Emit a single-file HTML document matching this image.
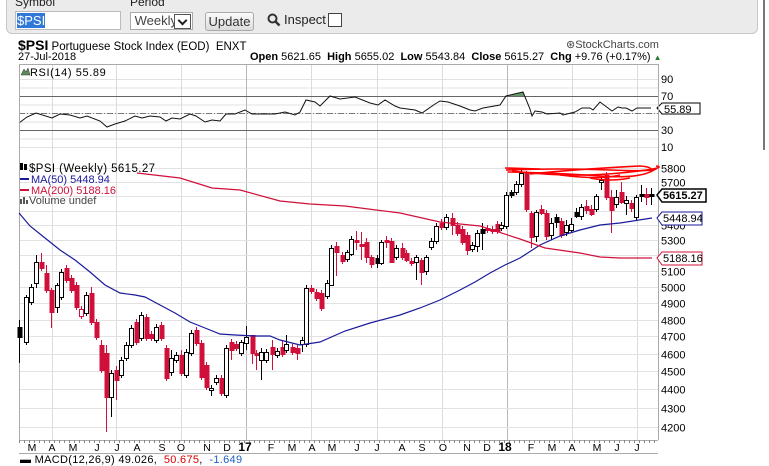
<!DOCTYPE html>
<html><head><meta charset="utf-8">
<style>
body{margin:0;width:769px;height:462px;overflow:hidden;background:#fff;font-family:"Liberation Sans",Arial,sans-serif;position:relative}
.abs{position:absolute;white-space:nowrap}
</style></head><body>
<div class="abs" style="left:6px;top:-6px;width:750px;height:38px;background:#ebebeb;border:1px solid #c8c8c8;border-radius:0 0 6px 6px"></div>
<div class="abs" style="left:15px;top:-5px;font-size:12px;color:#222">Symbol</div>
<div class="abs" style="left:130px;top:-5px;font-size:12px;color:#222">Period</div>
<div class="abs" style="left:15px;top:11px;width:104px;height:17px;background:#fff;border:1px solid #bbb;font-size:13px;line-height:17px"><span style="background:#3078d8;color:#fff;margin-left:1px">$PSI</span></div>
<div class="abs" style="left:130px;top:12px;width:61px;height:16px;background:#fff;border:1px solid #aaa;font-size:13px;line-height:16px;color:#444">&nbsp;Weekly<span style="position:absolute;right:1px;top:1px;width:15px;height:13px;border:1px solid #555;background:#fff"><span style="position:absolute;left:4px;top:2px;width:5px;height:5px;border-right:2px solid #222;border-bottom:2px solid #222;transform:rotate(45deg)"></span></span></div>
<div class="abs" style="left:205px;top:12px;width:47px;height:17px;background:linear-gradient(#fafafa,#dcdcdc);border:1px solid #aaa;border-radius:3px;font-size:13px;line-height:17px;text-align:center;color:#333">Update</div>
<svg class="abs" style="left:267px;top:13px" width="14" height="14"><circle cx="5.5" cy="5.5" r="4" fill="none" stroke="#333" stroke-width="2"/><line x1="8.5" y1="8.5" x2="12.5" y2="12.5" stroke="#333" stroke-width="2.5"/></svg>
<div class="abs" style="left:284px;top:12px;font-size:13px;color:#222">Inspect</div>
<div class="abs" style="left:328px;top:13px;width:12px;height:12px;background:#fff;border:1px solid #444"></div>
<div class="abs" style="left:763px;top:0;width:2px;height:150px;background:#777"></div>

<div class="abs" style="left:18px;top:37px;font-size:11.5px;color:#000"><b style="font-size:14px">$PSI</b> Portuguese Stock Index (EOD)&nbsp; ENXT</div>
<div class="abs" style="left:18px;top:51px;font-size:11px">27-Jul-2018</div>
<div class="abs" style="left:566px;top:38px;font-size:11px;color:#444">&#x229B;StockCharts.com</div>
<div class="abs" style="left:250px;top:51px;font-size:11px"><b>Open</b> 5621.65&nbsp; <b>High</b> 5655.02&nbsp; <b>Low</b> 5543.84&nbsp; <b>Close</b> 5615.27&nbsp; <b>Chg</b> +9.76 (+0.17%) <span style="color:#2a7a2a;font-size:8px">&#9650;</span></div>

<svg id="c" class="abs" style="left:0;top:0" width="769" height="462" font-family="Liberation Sans, Arial, sans-serif"></svg>
<div class="abs" style="left:20px;top:454px;font-size:11px;letter-spacing:0.3px">&#9644; MACD(12,26,9) 49.026,&nbsp; <span style="color:#d00">50.675</span>,&nbsp; <span style="color:#2060c0">-1.649</span></div>
<script>
var s=[],L=19,R=658;
function ln(x1,y1,x2,y2,c,w,d){s.push('<line x1="'+x1+'" y1="'+y1+'" x2="'+x2+'" y2="'+y2+'" stroke="'+c+'" stroke-width="'+(w||1)+'"'+(d?' stroke-dasharray="'+d+'"':'')+'/>');}
function tx(x,y,t,sz,c,extra){s.push('<text x="'+x+'" y="'+y+'" font-size="'+(sz||11)+'" fill="'+(c||'#000')+'" '+(extra||'')+'>'+t+'</text>');}
var ry=function(v){return 113+(50-v)*0.85};
for(var v=10;v<=90;v+=10){ln(L,ry(v)+.5,R,ry(v)+.5,'#e2e2e2');}
var vx=[52,116,181,311,377,442,572,637];
vx.forEach(function(x){ln(x+.5,64,x+.5,440,'#dcdcdc');});
[246,507].forEach(function(x){ln(x+.5,64,x+.5,440,'#b8b8b8');});
ln(L,96.5,R,96.5,'#666');ln(L,130.5,R,130.5,'#666');ln(L,113.5,R,113.5,'#777',1,'6,2,1,2');
[90,70,50,30,10].forEach(function(v){if(v!=50)tx(661,ry(v)+4,v,11);});
var rsi=[[19,123],[27,117],[36,113],[52,118],[60,114],[70,115],[80,118],[87,116],[100,121],[107,127],[115,124],[125,121],[135,116],[142,118],[150,116],[160,117],[166,121],[172,118],[180,119],[190,114],[196,116],[205,122],[212,120],[220,121],[226,114],[235,114],[245,110],[252,114],[275,114],[285,112],[295,115],[300,112],[306,100],[315,102],[320,106],[330,96],[340,99],[355,97],[370,103],[378,105],[385,100],[395,106],[400,108],[415,110],[422,113],[435,104],[440,101],[448,102],[460,106],[470,110],[475,111],[483,108],[500,105],[506,96],[523,92],[530,109],[532,116],[535,111],[542,112],[547,114],[560,113],[563,115],[575,112],[582,108],[590,108],[593,110],[600,102],[608,108],[612,111],[618,107],[622,108],[626,108],[632,111],[637,108],[645,108],[651,108]];
s.push('<polygon points="506,96 523,92 525,96" fill="#6a9a6a"/>');
s.push('<polyline points="'+rsi.join(' ')+'" fill="none" stroke="#111" stroke-width="1"/>');
s.push('<path d="M657 108 l5 -5 h38 v11 h-38z" fill="#fff" stroke="#000"/>');tx(664,113,'55.89',11);
var py=function(p){return 168+801*Math.log(5800/p)};
for(var p=4200;p<=5800;p+=100){var y=Math.round(py(p))+.5;ln(L,y,R,y,'#e2e2e2');if(![5500,5600].includes(p))tx(661,y+4,p,11);}
ln(L+.5,64,L+.5,440,'#aaa');ln(R+.5,64,R+.5,440,'#aaa');ln(L,64.5,R,64.5,'#aaa');ln(L,440.5,R,440.5,'#aaa');
var C=[[19,327,337,'b',320,363],[26,297,342,'w',295,345],[31,287,302,'w'],[36,262,283,'w',255,288],[41,262,268,'r',253],[46,273,290,'r',265],[51,290,312,'r',288,328],[57,285,307,'w',283,313],[61,272,297,'w'],[66,268,280,'r'],[71,278,290,'r'],[76,285,307,'r'],[81,309,316,'h'],[86,295,313,'w'],[91,293,322,'r',287],[96,322,337,'r'],[101,345,370,'r',340],[106,353,397,'r',345,432],[111,373,397,'w',370,417],[116,370,380,'r',366,400],[121,360,375,'w'],[126,345,358,'w'],[131,328,345,'w'],[136,322,342,'r'],[141,315,338,'w'],[146,317,338,'r',314],[151,334,338,'r'],[156,327,340,'w'],[161,325,338,'r'],[166,348,378,'r'],[171,358,372,'w',350,376],[176,355,360,'w'],[181,355,373,'r',350,376],[186,352,375,'w'],[191,333,353,'w'],[196,330,343,'r'],[201,343,377,'r'],[206,365,387,'r'],[211,388,390,'w',385,396],[216,378,382,'w'],[221,378,393,'r'],[226,348,395,'w'],[231,342,350,'r',339,360],[236,344,348,'r'],[241,342,353,'w',340,356],[246,337,343,'w',326,350],[252,335,353,'r',335,364],[256,353,355,'r',350,370],[261,352,360,'w',348,380],[266,352,360,'w'],[272,347,354,'r',340,370],[277,351,355,'w'],[282,347,354,'r',340],[286,344,350,'w',335],[292,347,352,'r'],[297,348,353,'r',345,360],[302,340,344,'w',337,352],[306,288,344,'w'],[311,288,291,'r'],[316,292,298,'r'],[321,293,308,'r'],[327,283,296,'w'],[331,248,285,'w',245,286],[336,246,252,'r',242,276],[342,255,261,'r'],[347,252,259,'w',250,262],[351,239,254,'w',236,256],[356,240,242,'r',231,250],[361,244,246,'r',232,260],[366,242,257,'r',238,263],[371,257,264,'r',255,268],[377,258,263,'b',255,268],[381,242,263,'w',240,265],[386,240,242,'r',236,248],[391,241,262,'r',238,263],[396,248,257,'w'],[402,248,257,'r',243,260],[406,253,260,'r',250,262],[411,261,263,'r'],[416,257,262,'w',255,280],[421,260,272,'r',258,285],[426,257,271,'w',255,275],[431,241,247,'w'],[436,226,241,'w'],[441,223,227,'r',219],[446,217,227,'w'],[452,218,225,'r',213,235],[457,225,233,'r'],[462,229,242,'r',226,245],[467,235,250,'r',232,255],[472,245,249,'w'],[477,233,246,'w',230,252],[482,229,233,'b',223,250],[487,228,230,'r',225],[492,229,231,'r'],[497,224,231,'r',221],[501,225,228,'w'],[506,195,226,'w'],[511,192,195,'b',190,198],[516,184,192,'w'],[521,173,184,'w'],[526,173,209,'r',171],[531,213,237,'r',211,248],[536,212,236,'w',210,242],[541,209,213,'r',205,215],[546,213,236,'r',210,240],[551,223,235,'w',218,240],[556,217,222,'b',214,228],[561,221,235,'r',218,238],[566,225,232,'w',220,236],[571,224,230,'w',218,233],[576,212,216,'b',208,218],[581,207,216,'w',204,220],[586,206,210,'r',200,214],[591,209,214,'r',205,216],[596,196,209,'w',194,212],[601,180,182,'w',176,190],[606,175,197,'r',172,200],[611,197,210,'r',190,233],[616,197,204,'w',190,208],[621,192,202,'r',182,204],[626,200,203,'w',196,215],[631,203,208,'r',200,212],[636,197,217,'w',195,220],[641,194,196,'b',185,202],[646,194,197,'r',188,205],[651,194,196,'b',188,205]];
C.forEach(function(c){var x=c[0],t=c[1],b=c[2],k=c[3],wt=c[4]||t-3,wb=c[5]||b+3;
var col=(k=='r'||k=='h')?'#d0103a':'#000';
ln(x+.5,wt,x+.5,wb,col);
var h=Math.max(b-t,2);
if(k=='w'||k=='h')s.push('<rect x="'+(x-1.5)+'" y="'+(t+.5)+'" width="4" height="'+h+'" fill="#fff" stroke="'+col+'"/>');
else s.push('<rect x="'+(x-1.5)+'" y="'+t+'" width="5" height="'+(h+1)+'" fill="'+col+'"/>');});
var ma50=[[19,213],[30,226],[45,238],[60,250],[75,260],[90,272],[105,285],[120,293],[135,295],[145,297],[160,305],[175,313],[190,322],[205,328],[220,334],[235,335],[255,336],[270,336],[280,340],[300,345],[320,342],[345,331],[370,323],[400,315],[420,308],[440,300],[460,290],[475,282],[490,273],[505,265],[520,258],[540,245],[560,236],[580,230],[600,225],[620,223],[652,218]];
s.push('<polyline points="'+ma50.join(' ')+'" fill="none" stroke="#1a1a9a" stroke-width="1.2"/>');
var ma200=[[137,173],[180,178],[212,188],[240,190],[280,201],[310,204],[345,206],[400,213],[440,222],[480,226],[520,239],[545,248],[580,253],[600,257],[620,258],[652,258]];
s.push('<polyline points="'+ma200.join(' ')+'" fill="none" stroke="#d0103a" stroke-width="1.2"/>');
s.push('<g fill="none" stroke="#f00" stroke-width="1.6"><path d="M506 170 Q560 168 610 170 T656 168"/><path d="M508 172 Q560 173 600 176 T654 170"/><path d="M512 171 Q570 178 620 173 T656 166"/><path d="M530 174 Q580 169 640 166 Q655 167 650 172"/><path d="M560 175 Q600 180 620 175"/><path d="M590 178 Q610 182 630 178"/><path d="M505 168 L540 169"/></g>');
function box(y,t,c,b){var w=b?44:40;s.push('<path d="M657 '+y+' l5 -6 h'+w+' v13 h-'+w+'z" fill="#fff" stroke="'+c+'" stroke-width="'+(b?1.5:1)+'"/>');tx(663,y+4,t,b?11:11,'#000',b?'font-weight="bold"':'');}
box(195,'5615.27','#000',1);box(218,'5448.94','#1a1a9a');box(258,'5188.16','#d0103a');
s.push('<rect x="20" y="163" width="3" height="7" fill="#000"/><rect x="24" y="164" width="3" height="6" fill="#000"/>');
tx(29,172,'$PSI (Weekly) 5615.27',11.5,'#000','letter-spacing="0.4"');
s.push('<rect x="20" y="178" width="9" height="2" fill="#1a1a9a"/>');tx(31,183,'MA(50) 5448.94',11,'#1a1a9a');
s.push('<rect x="20" y="189" width="9" height="2" fill="#d0103a"/>');tx(31,194,'MA(200) 5188.16',11,'#d0103a');
s.push('<rect x="20" y="199" width="2" height="5" fill="#555"/><rect x="23" y="197" width="2" height="7" fill="#555"/><rect x="26" y="200" width="2" height="4" fill="#555"/>');
tx(29,204,'Volume undef',11,'#444');
s.push('<path d="M21 75 l3 -6 l2 3 l2 -4 l2 7z" fill="#5a8a5a" stroke="#333" stroke-width=".5"/>');
tx(30,76,'RSI(14) 55.89',11,'#000','letter-spacing="0.6"');
for(var x=L;x<R;x+=5)ln(x+.5,440,x+.5,443,'#888');
var mons=[[32,'M'],[52,'A'],[73,'M'],[97,'J'],[117,'J'],[137,'A'],[162,'S'],[181,'O'],[207,'N'],[227,'D'],[245,'17',1],[271,'F'],[292,'M'],[312,'A'],[332,'M'],[357,'J'],[377,'J'],[402,'A'],[422,'S'],[443,'O'],[467,'N'],[487,'D'],[505,'18',1],[531,'F'],[552,'M'],[572,'A'],[597,'M'],[617,'J'],[637,'J']];
mons.forEach(function(m){tx(m[0],451,m[1],m[2]?12:10.5,'#000','text-anchor="middle"'+(m[2]?' font-weight="bold"':''));});
ln(L,453.5,R,453.5,'#aaa');
document.getElementById('c').innerHTML=s.join('');
</script>
</body></html>
